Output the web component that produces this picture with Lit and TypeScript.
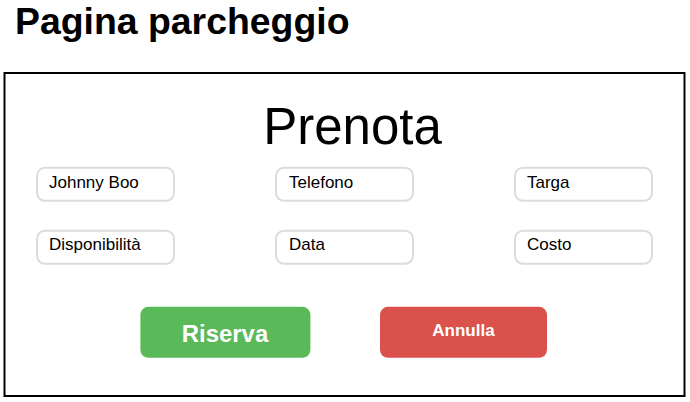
import { LitElement, html, css } from "lit";
import { customElement } from "lit/decorators.js";

@customElement("app-root")
export class AppRoot extends LitElement {
  static styles = css`
    :host {
      display: block;
      box-sizing: border-box;
      width: 690px;
      height: 402px;
      overflow: hidden;
      isolation: isolate;
      background: #fff;
      color: #000;
      font-family: "Liberation Sans", Arial, sans-serif;
    }
    *, *::before { box-sizing: border-box; }
    .title {
      margin: 0;
      padding: 0 0 0 15px;
      height: 72px;
      font-size: 37.4px;
      line-height: 43px;
      font-weight: 700;
      white-space: nowrap;
    }
    .panel {
      position: relative;
      margin-left: 4px;
      width: 681px;
      height: 325px;
      padding: 26px 32px 0;
    }
    .panel::before, .field::before, .button::before {
      content: "";
      position: absolute;
      inset: 0;
      z-index: -1;
    }
    .panel::before {
      border: 2px solid #000;
      transform: translateX(-0.5px);
      width: 682px;
    }
    .heading {
      margin: 0;
      height: 68px;
      padding-left: 16px;
      font-size: 51px;
      line-height: 57px;
      font-weight: 400;
      text-align: center;
    }
    .fields {
      display: grid;
      grid-template-columns: repeat(3, 139px);
      column-gap: 100px;
      row-gap: 28px;
    }
    .field {
      position: relative;
      height: 35px;
      padding: 2px 0 0 13px;
      font-size: 17px;
      line-height: 30px;
      white-space: nowrap;
    }
    .field:nth-child(2), .field:nth-child(5) { padding-left: 14px; }
    .field:nth-child(n + 4) { padding-top: 1px; }
    .field::before {
      border: 2px solid #dcdcdc;
      border-radius: 9px;
      transform: translate(0, 0.8px);
    }
    .actions {
      display: flex;
      gap: 70px;
      margin: 43px 0 0 104px;
    }
    .button {
      position: relative;
      width: 170px;
      height: 51px;
      color: #fff;
      font-size: 23.9px;
      font-weight: 700;
      line-height: 54px;
      text-align: center;
    }
    .button::before {
      border-radius: 8px;
      background: #5ab958;
      transform: translate(0.4px, -0.2px);
    }
    .cancel {
      width: 167px;
      font-size: 17px;
      line-height: 47px;
    }
    .cancel::before {
      background: #db524c;
      transform: translate(0, -0.2px);
    }
  `;

  render() {
    return html`
      <h1 class="title">Pagina parcheggio</h1>
      <section class="panel">
        <h2 class="heading">Prenota</h2>
        <div class="fields">
          ${["Johnny Boo", "Telefono", "Targa", "Disponibilità", "Data", "Costo"].map(
            (label) => html`<div class="field">${label}</div>`
          )}
        </div>
        <div class="actions">
          <div class="button">Riserva</div>
          <div class="button cancel">Annulla</div>
        </div>
      </section>
    `;
  }
}
